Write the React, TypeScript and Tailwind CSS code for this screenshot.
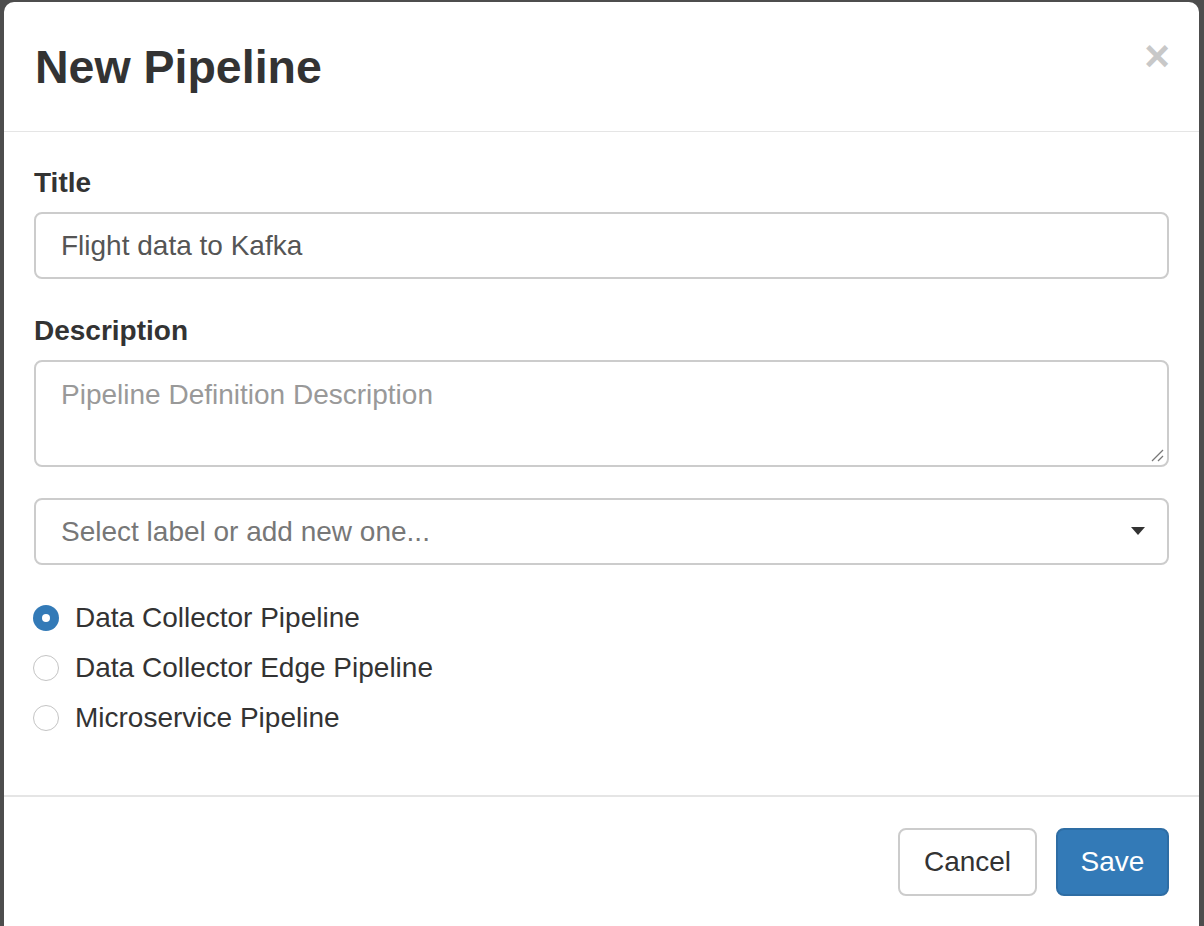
import React from "react";

export default function App() {
  const font = { fontFamily: '"Liberation Sans", Arial, sans-serif' };
  return (
    <div className="w-[1204px] h-[926px] bg-[#4d4d4d] pl-[4px] pt-[2px] overflow-hidden" style={font}>
      <div className="w-[1195px] h-[935px] bg-white rounded-[10px] flex flex-col text-[#333]">
        {/* Header */}
        <div className="h-[130px] border-b border-[#e5e5e5] flex items-start justify-between pl-[31px] pr-[31px] pt-[40px]">
          <h1 className="text-[46.5px] font-bold leading-[51px] text-[#333]">New Pipeline</h1>
          <span className="text-[44px] font-bold leading-[40px] text-[#c8c8c8] -mt-[6px] -mr-[2px]">×</span>
        </div>

        {/* Body */}
        <div className="px-[30px] pt-[31px] flex flex-col">
          <label className="text-[28px] font-bold leading-[40px] text-[#333]">Title</label>
          <div className="mt-[9px] h-[67px] border-2 border-[#cccccc] rounded-[8px] flex items-center px-[25px] text-[28px] text-[#555]">
            Flight data to Kafka
          </div>

          <label className="mt-[32px] text-[28px] font-bold leading-[40px] text-[#333]">Description</label>
          <div className="relative mt-[9px] h-[107px] border-2 border-[#cccccc] rounded-[8px] px-[25px] pt-[13px] text-[28px] leading-[40px] text-[#999]">
            Pipeline Definition Description
            <svg className="absolute right-[3px] bottom-[3px]" width="14" height="14" viewBox="0 0 14 14">
              <line x1="2" y1="13" x2="13" y2="2" stroke="#777" strokeWidth="1.3" />
              <line x1="8" y1="13" x2="13" y2="8" stroke="#777" strokeWidth="1.3" />
            </svg>
          </div>

          <div className="mt-[31px] h-[67px] border-2 border-[#cccccc] rounded-[8px] flex items-center justify-between pl-[25px] pr-[22px] text-[28px] text-[#777]">
            <span>Select label or add new one...</span>
            <svg width="14" height="9" viewBox="0 0 14 9">
              <path d="M0 0 L14 0 L7 8 Z" fill="#333" />
            </svg>
          </div>

          <div className="mt-[28px] flex flex-col">
            <div className="h-[50px] flex items-center">
              <span className="w-[26px] h-[26px] rounded-full bg-[#337ab7] flex items-center justify-center -ml-[1px]">
                <span className="w-[8px] h-[8px] rounded-full bg-white" />
              </span>
              <span className="ml-[16px] text-[28px] text-[#333]">Data Collector Pipeline</span>
            </div>
            <div className="h-[50px] flex items-center">
              <span className="w-[26px] h-[26px] rounded-full border-[1.5px] border-[#c4c4c4] bg-white -ml-[1px]" />
              <span className="ml-[16px] text-[28px] text-[#333]">Data Collector Edge Pipeline</span>
            </div>
            <div className="h-[50px] flex items-center">
              <span className="w-[26px] h-[26px] rounded-full border-[1.5px] border-[#c4c4c4] bg-white -ml-[1px]" />
              <span className="ml-[16px] text-[28px] text-[#333]">Microservice Pipeline</span>
            </div>
          </div>
        </div>

        {/* Footer */}
        <div className="mt-[52px] border-t-2 border-[#e5e5e5] flex justify-end gap-[19px] px-[30px] pt-[31px]">
          <button className="w-[139px] h-[68px] border-2 border-[#cccccc] rounded-[8px] bg-white text-[28px] text-[#333]">
            Cancel
          </button>
          <button className="w-[113px] h-[68px] border-2 border-[#2e6da4] rounded-[8px] bg-[#337ab7] text-[28px] text-white">
            Save
          </button>
        </div>
      </div>
    </div>
  );
}
